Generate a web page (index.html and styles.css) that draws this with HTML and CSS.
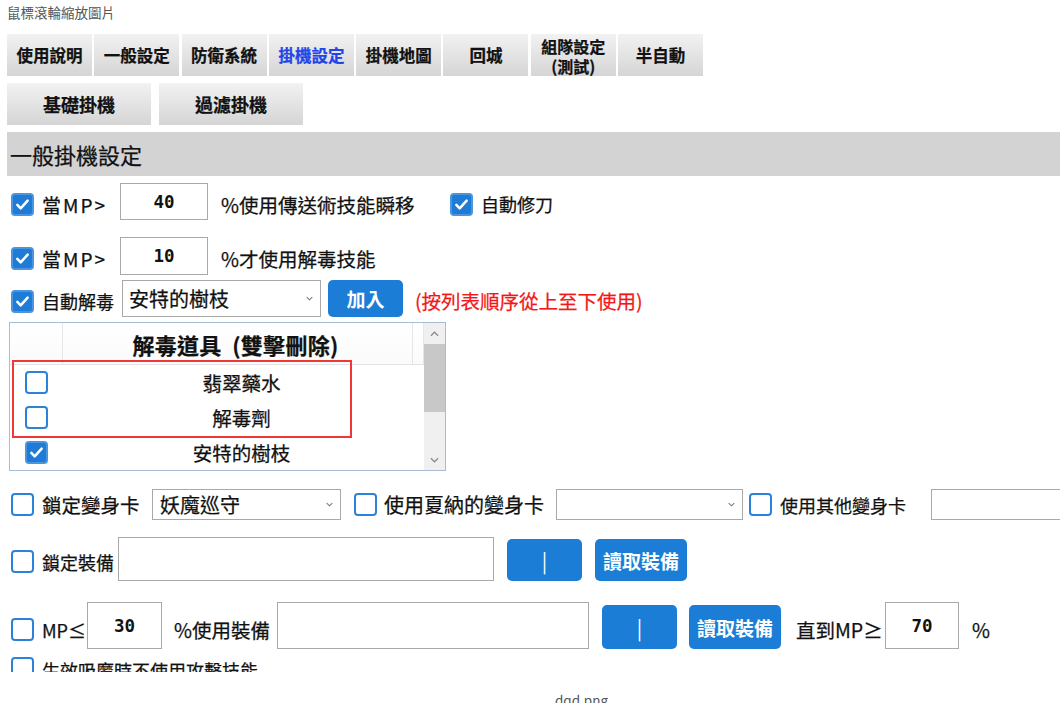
FILE: index.html
```html
<!DOCTYPE html>
<html lang="zh-Hant">
<head>
    <meta charset="UTF-8">
    <meta name="viewport" content="width=device-width, initial-scale=1.0">
    <title>dqd.png</title>
    <link rel="stylesheet" href="styles.css">
</head>
<body>
    <div class="caption">鼠標滾輪縮放圖片</div>

    <div class="shot">
        <div class="tabs">
            <div class="tab">使用說明</div>
            <div class="tab">一般設定</div>
            <div class="tab">防衛系統</div>
            <div class="tab tab-active">掛機設定</div>
            <div class="tab">掛機地圖</div>
            <div class="tab">回城</div>
            <div class="tab tab-two"><span>組隊設定</span><span>(測試)</span></div>
            <div class="tab">半自動</div>
        </div>

        <div class="subtabs">
            <div class="subtab">基礎掛機</div>
            <div class="subtab">過濾掛機</div>
        </div>

        <div class="section-title">一般掛機設定</div>

        <!-- teleport -->
        <div class="row row-1">
            <span class="check on low"><svg viewBox="0 0 24 24"><path d="M5.5 12.5l4.2 4.3 8.8-9.6"/></svg></span>
            <span class="label low w-mp">當MP&gt;</span>
            <div class="field w-88">40</div>
            <span class="label big low gap-13 w-teleport">%使用傳送術技能瞬移</span>
            <span class="check on low"><svg viewBox="0 0 24 24"><path d="M5.5 12.5l4.2 4.3 8.8-9.6"/></svg></span>
            <span class="label low">自動修刀</span>
        </div>

        <!-- cure skill -->
        <div class="row row-2">
            <span class="check on low"><svg viewBox="0 0 24 24"><path d="M5.5 12.5l4.2 4.3 8.8-9.6"/></svg></span>
            <span class="label low w-mp">當MP&gt;</span>
            <div class="field w-88">10</div>
            <span class="label big low gap-13">%才使用解毒技能</span>
        </div>

        <!-- auto cure -->
        <div class="row row-3">
            <span class="check on low"><svg viewBox="0 0 24 24"><path d="M5.5 12.5l4.2 4.3 8.8-9.6"/></svg></span>
            <span class="label low w-cure">自動解毒</span>
            <div class="select w-199">安特的樹枝<svg class="caret" viewBox="0 0 8 5"><path d="M0.8 0.8L4 4 7.2 0.8"/></svg></div>
            <div class="btn btn-add">加入</div>
            <span class="note">(按列表順序從上至下使用)</span>
        </div>

        <div class="listbox">
            <div class="list-main">
                <div class="list-head">
                    <div class="head-cell"></div>
                    <div class="head-cell head-title">解毒道具&nbsp; (雙擊刪除)</div>
                    <div class="head-cell"></div>
                </div>
                <div class="list-row">
                    <span class="check"></span>
                    <span class="item">翡翠藥水</span>
                </div>
                <div class="list-row">
                    <span class="check"></span>
                    <span class="item">解毒劑</span>
                </div>
                <div class="list-row">
                    <span class="check on"><svg viewBox="0 0 24 24"><path d="M5.5 12.5l4.2 4.3 8.8-9.6"/></svg></span>
                    <span class="item">安特的樹枝</span>
                </div>
            </div>
            <div class="scrollbar">
                <div class="sb-arrow"><svg viewBox="0 0 10 6"><path d="M1 5L5 1 9 5"/></svg></div>
                <div class="sb-thumb"></div>
                <div class="sb-track"></div>
                <div class="sb-arrow"><svg viewBox="0 0 10 6"><path d="M1 1L5 5 9 1"/></svg></div>
            </div>
            <div class="highlight"></div>
        </div>

        <!-- polymorph cards -->
        <div class="row row-4">
            <span class="check"></span>
            <span class="label big w-poly">鎖定變身卡</span>
            <div class="select w-189">妖魔巡守<svg class="caret" viewBox="0 0 8 5"><path d="M0.8 0.8L4 4 7.2 0.8"/></svg></div>
            <span class="check gap-13"></span>
            <span class="label wide gap-7 w-shana">使用夏納的變身卡</span>
            <div class="select w-187"><span></span><svg class="caret" viewBox="0 0 8 5"><path d="M0.8 0.8L4 4 7.2 0.8"/></svg></div>
            <span class="check gap-6"></span>
            <span class="label w-other">使用其他變身卡</span>
            <div class="field w-200"></div>
        </div>

        <!-- lock equipment -->
        <div class="row row-5">
            <span class="check low"></span>
            <span class="label low w-lock">鎖定裝備</span>
            <div class="field w-376"></div>
            <div class="btn btn-bar gap-13">|</div>
            <div class="btn btn-read gap-13">讀取裝備</div>
        </div>

        <!-- mp equipment -->
        <div class="row row-6">
            <span class="check lower"></span>
            <span class="label lower w-mple">MP≤</span>
            <div class="field w-75">30</div>
            <span class="label big lower gap-12 w-use">%使用裝備</span>
            <div class="field w-312"></div>
            <div class="btn btn-bar gap-13">|</div>
            <div class="btn btn-read gap-12">讀取裝備</div>
            <span class="label big lower gap-15 w-until">直到MP≥</span>
            <div class="field w-74">70</div>
            <span class="label big lower gap-13">%</span>
        </div>

        <div class="row row-7">
            <span class="check"></span>
            <span class="label">生效吸魔時不使用攻擊技能</span>
        </div>
    </div>

    <div class="filename">dqd.png</div>
</body>
</html>
```

FILE: styles.css
```css
* {
    margin: 0;
    padding: 0;
    box-sizing: border-box;
}

body {
    font-family: "Noto Sans CJK TC", "Noto Sans", sans-serif;
    color: #111;
    background: #fff;
    width: 1060px;
    height: 703px;
    overflow: hidden;
}

.caption {
    height: 34px;
    padding-left: 7px;
    font-size: 13.5px;
    line-height: 24px;
    color: #555;
}

.shot {
    width: 1060px;
    height: 638px;
    padding-left: 7px;
    overflow: hidden;
    -webkit-text-stroke: 0.25px currentColor;
}

/* tabs */
.tabs {
    display: flex;
    gap: 2.3px;
    height: 42px;
}

.tab {
    width: 85px;
    height: 42px;
    background: linear-gradient(#f2f2f2, #d5d5d5);
    display: flex;
    align-items: center;
    justify-content: center;
    text-align: center;
    font-size: 16.5px;
    font-weight: bold;
    line-height: 17px;
    color: #111;
}

.tab-two {
    flex-direction: column;
    font-size: 16px;
    line-height: 20px;
    padding-top: 2px;
}

.tab-two span {
    display: block;
    height: 20px;
}

.tab-active {
    color: #2244e8;
}

.subtabs {
    display: flex;
    gap: 8px;
    margin-top: 7px;
}

.subtab {
    width: 144px;
    height: 42px;
    background: linear-gradient(#f2f2f2, #d5d5d5);
    display: flex;
    align-items: center;
    justify-content: center;
    font-size: 18px;
    font-weight: bold;
}

.section-title {
    margin-top: 7px;
    height: 44px;
    background: #d3d3d3;
    padding-left: 3px;
    font-size: 22px;
    line-height: 44px;
}

/* rows */
.row {
    display: flex;
    align-items: center;
    white-space: nowrap;
}

.row-1 { margin-top: 7px; height: 37px; }
.row-2 { margin-top: 17px; height: 38px; }
.row-3 { margin-top: 5px; height: 37px; }
.row-4 { margin-top: 18px; height: 31px; }
.row-5 { margin-top: 17px; height: 44px; }
.row-6 { margin-top: 21px; height: 47px; }
.row-7 { margin-top: 8px; height: 30px; align-items: flex-start; }

.check {
    width: 23px;
    height: 23px;
    flex-shrink: 0;
    border: 2px solid #2a83d9;
    border-radius: 4px;
    background: #fff;
    margin-left: 4px;
    display: flex;
    align-items: center;
    justify-content: center;
}

.check.on {
    background: #1f7cd6;
    border-color: #4a95de;
}

.check svg {
    width: 19px;
    height: 19px;
    fill: none;
    stroke: #fff;
    stroke-width: 3.2;
    stroke-linecap: round;
    stroke-linejoin: round;
}

.low { margin-top: 5px; }
.lower { margin-top: 8px; }

.label {
    margin-left: 9px;
    font-size: 18px;
    flex-shrink: 0;
}

.label.big {
    font-size: 19.5px;
}

.label.wide {
    font-size: 20px;
}

.row .check + .label { margin-left: 8px; }

.label.w-mp {
    font-size: 19px;
    letter-spacing: 2px;
}

.gap-6 { margin-left: 6px; }
.gap-7 { margin-left: 7px; }
.row .check + .label.gap-7 { margin-left: 7px; }
.gap-12 { margin-left: 12px; }
.gap-13 { margin-left: 13px; }
.gap-15 { margin-left: 15px; }

.w-mp { width: 78px; }
.w-teleport { width: 225px; }
.w-cure { width: 80px; }
.w-poly { width: 110px; }
.w-shana { width: 172px; }
.w-other { width: 151px; }
.w-lock { width: 76px; }
.w-mple { width: 45px; }
.w-use { width: 103px; }
.w-until { width: 89px; }

.field {
    height: 100%;
    border: 1px solid #a9a9a9;
    background: #fff;
    display: flex;
    align-items: center;
    justify-content: center;
    font-family: "DejaVu Sans Mono", "Liberation Mono", monospace;
    font-weight: bold;
    font-size: 17.5px;
    flex-shrink: 0;
    -webkit-text-stroke: 0;
}

.w-74 { width: 74px; }
.w-75 { width: 75px; }
.w-88 { width: 88px; }
.w-200 { width: 200px; }
.w-312 { width: 312px; }
.w-376 { width: 376px; }

.select {
    height: 100%;
    border: 1px solid #a9a9a9;
    background: #fff;
    display: flex;
    align-items: center;
    justify-content: space-between;
    padding: 0 7px 0 6px;
    font-size: 20px;
    flex-shrink: 0;
}

.row-4 .select { height: 31px; padding-left: 7px; }

.w-187 { width: 187px; }
.w-189 { width: 189px; }
.w-199 { width: 199px; }

.caret {
    width: 7px;
    height: 5px;
    fill: none;
    stroke: #777;
    stroke-width: 1.2;
}

.btn {
    background: #1b7dd5;
    color: #fff;
    border-radius: 5px;
    font-weight: bold;
    font-size: 19px;
    display: flex;
    align-items: center;
    justify-content: center;
    flex-shrink: 0;
    -webkit-text-stroke: 0;
}

.btn-add {
    width: 75px;
    height: 37px;
    margin-left: 7px;
}

.btn-bar {
    width: 75px;
    height: 42px;
    align-self: flex-end;
    font-weight: normal;
    font-size: 20px;
}

.row-6 .btn {
    height: 44px;
}

.btn-read {
    width: 92px;
    height: 42px;
    align-self: flex-end;
}

.note {
    margin-left: 12px;
    margin-top: 3px;
    font-size: 19.5px;
    color: #f21818;
}

/* cure item list */
.listbox {
    position: relative;
    margin-top: 5px;
    margin-left: 2px;
    width: 437px;
    height: 149px;
    border: 1px solid #a8bdd3;
    display: flex;
    background: #fff;
}

.list-main {
    flex: 1;
}

.list-head {
    display: grid;
    grid-template-columns: 53px 350px 1fr;
    height: 42px;
    border-bottom: 1px solid #e3e3e3;
}

.head-cell {
    border-right: 1px solid #e6e6e6;
    background: linear-gradient(#fff, #fbfbfb);
}

.head-title {
    display: flex;
    align-items: center;
    justify-content: center;
    font-size: 22px;
    font-weight: bold;
    letter-spacing: 0.3px;
    padding-right: 4px;
}

.list-row {
    display: flex;
    align-items: center;
    height: 35px;
}

.list-row .check {
    margin-left: 15px;
}

.item {
    flex: 1;
    text-align: center;
    padding-left: 11px;
    font-size: 19.5px;
}

.scrollbar {
    width: 21px;
    background: #f0f0f0;
    display: flex;
    flex-direction: column;
}

.sb-arrow {
    height: 21px;
    display: flex;
    align-items: center;
    justify-content: center;
}

.sb-arrow svg {
    width: 9px;
    height: 6px;
    fill: none;
    stroke: #8c8c8c;
    stroke-width: 1.4;
}

.sb-thumb {
    height: 68px;
    background: #c8c8c8;
}

.sb-track {
    flex: 1;
}

.highlight {
    position: absolute;
    left: 2px;
    top: 37px;
    width: 340px;
    height: 78px;
    border: 2.5px solid #ee3838;
}

.filename {
    margin-top: 19px;
    padding-left: 555px;
    font-size: 13.5px;
    line-height: 18px;
    color: #555;
}
```
